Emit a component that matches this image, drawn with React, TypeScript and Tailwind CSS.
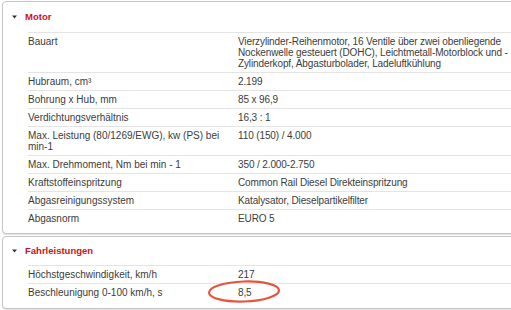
import type { ReactNode } from 'react'

type Row = { label: ReactNode; value: ReactNode }

const motorRows: Row[] = [
  {
    label: 'Bauart',
    value: (
      <>
        Vierzylinder-Reihenmotor, 16 Ventile über zwei obenliegende
        <br />
        Nockenwelle gesteuert (DOHC), Leichtmetall-Motorblock und -
        <br />
        Zylinderkopf, Abgasturbolader, Ladeluftkühlung
      </>
    ),
  },
  { label: 'Hubraum, cm³', value: '2.199' },
  { label: 'Bohrung x Hub, mm', value: '85 x 96,9' },
  { label: 'Verdichtungsverhältnis', value: '16,3 : 1' },
  {
    label: (
      <>
        Max. Leistung (80/1269/EWG), kw (PS) bei
        <br />
        min-1
      </>
    ),
    value: '110 (150) / 4.000',
  },
  { label: 'Max. Drehmoment, Nm bei min - 1', value: '350 / 2.000-2.750' },
  { label: 'Kraftstoffeinspritzung', value: 'Common Rail Diesel Direkteinspritzung' },
  { label: 'Abgasreinigungssystem', value: 'Katalysator, Dieselpartikelfilter' },
  { label: 'Abgasnorm', value: 'EURO 5' },
]

const fahrRows: Row[] = [
  { label: 'Höchstgeschwindigkeit, km/h', value: '217' },
  { label: 'Beschleunigung 0-100 km/h, s', value: '8,5' },
]

function Caret() {
  return (
    <svg width="5" height="4" viewBox="0 0 5 4" className="shrink-0">
      <path d="M0 0.5 L5 0.5 L2.5 3.5 Z" fill="#333" />
    </svg>
  )
}

function Panel({
  title,
  rows,
  headerHeight,
  bottomPad,
}: {
  title: string
  rows: Row[]
  headerHeight: string
  bottomPad: string
}) {
  return (
    <div className={`rounded-[4px] border border-[#c6c6c6] bg-white shadow-[0_1px_1px_rgba(0,0,0,0.12)] ${bottomPad}`}>
      <div className={`flex items-center gap-[8px] pl-[9px] ${headerHeight}`}>
        <Caret />
        <span className="text-[9.5px] font-bold text-[#d0101a]">{title}</span>
      </div>
      <div className="ml-[25px]">
        {rows.map((row, i) => (
          <div key={i} className="flex border-t border-[#e4e4e4] py-[3px] text-[10px] leading-[11px] text-[#3c3c3c]">
            <div className="w-[210px] shrink-0">{row.label}</div>
            <div className="flex-1 whitespace-nowrap tracking-[-0.12px]">{row.value}</div>
          </div>
        ))}
      </div>
    </div>
  )
}

export default function App() {
  return (
    <div className="relative h-[310px] w-[511px] overflow-hidden bg-white font-['Liberation_Sans',Arial,sans-serif]">
      <div className="flex w-[540px] flex-col gap-[2px] pl-[2px] pt-[1px]">
        <Panel title="Motor" rows={motorRows} headerHeight="h-[30px]" bottomPad="pb-[6px]" />
        <Panel title="Fahrleistungen" rows={fahrRows} headerHeight="h-[28px]" bottomPad="pb-[7px]" />
      </div>
      <svg className="absolute left-[206px] top-[279px]" width="76" height="25" viewBox="0 0 76 25">
        <ellipse
          cx="38"
          cy="12.5"
          rx="35"
          ry="10"
          fill="none"
          stroke="#e5553d"
          strokeWidth="2.2"
          transform="rotate(-2 38 12.5)"
        />
      </svg>
    </div>
  )
}
